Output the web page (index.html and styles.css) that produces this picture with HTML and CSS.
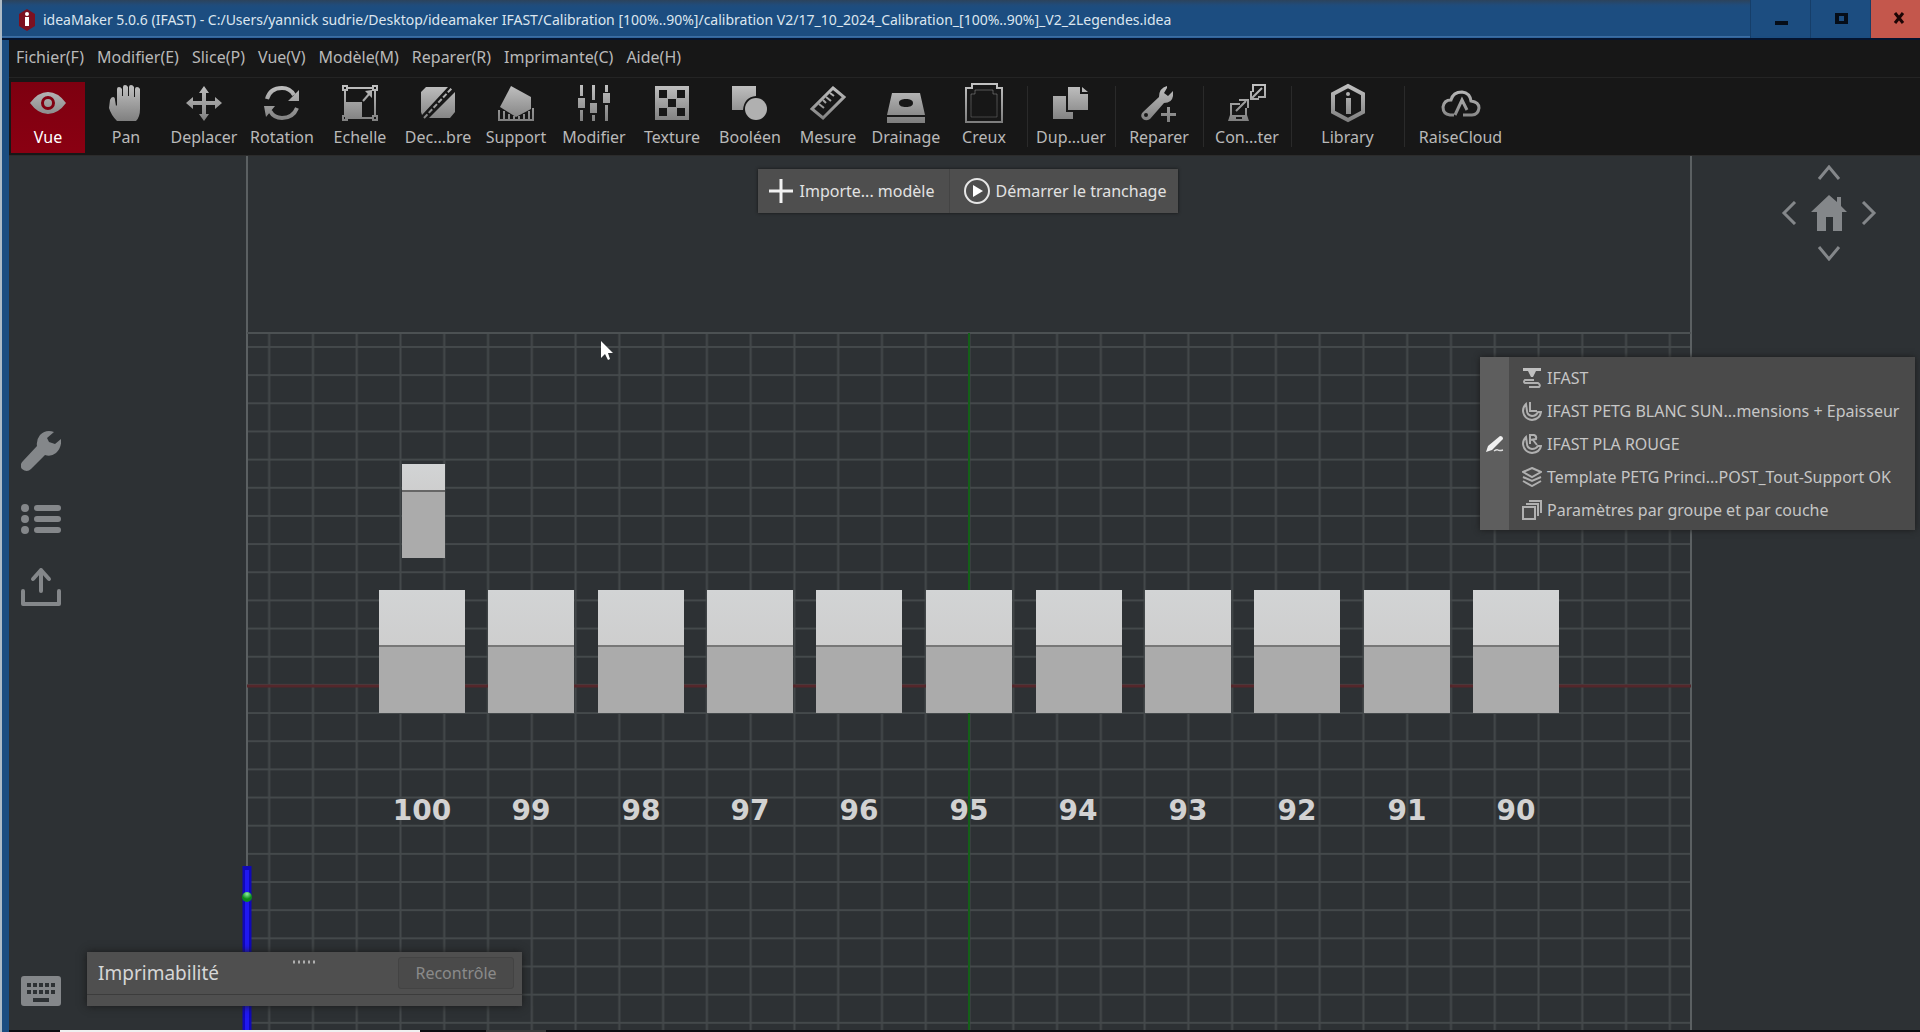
FILE: index.html
```html
<!DOCTYPE html>
<html lang="fr">
<head>
<meta charset="utf-8">
<title>ideaMaker 5.0.6 (IFAST)</title>
<link rel="stylesheet" href="styles.css">
</head>
<body>
<svg class="defs" aria-hidden="true">
  <defs>
    <linearGradient id="metal" gradientUnits="userSpaceOnUse" x1="0" y1="2" x2="0" y2="40">
      <stop offset="0" stop-color="#c2c2c2"/><stop offset="1" stop-color="#7e7e7e"/>
    </linearGradient>
  </defs>
</svg>
<div class="window">
  <header class="titlebar">
    <svg class="app-logo" viewBox="0 0 18 22"><path d="M9 0l8 5v12l-8 5-8-5V5z" fill="#7c1020"/><path d="M7 8h4v9H7z" fill="#fff"/><circle cx="9" cy="5" r="2" fill="#fff"/></svg>
    <h1 class="title">ideaMaker 5.0.6 (IFAST) - C:/Users/yannick sudrie/Desktop/ideamaker IFAST/Calibration [100%..90%]/calibration V2/17_10_2024_Calibration_[100%..90%]_V2_2Legendes.idea</h1>
    <div class="window-buttons">
      <button class="wbtn" aria-label="Réduire"><svg viewBox="0 0 20 20"><path d="M4 12h13v4H4z"/></svg></button>
      <button class="wbtn" aria-label="Agrandir"><svg viewBox="0 0 20 20"><path fill-rule="evenodd" d="M4 4h13v11H4zM8 7v5h5V7z"/></svg></button>
      <button class="wbtn wbtn-close" aria-label="Fermer"><svg viewBox="0 0 20 20"><path d="M9 4l8 10M17 4L9 14" stroke="#1c0505" stroke-width="3"/></svg></button>
    </div>
  </header>

  <nav class="menubar" aria-label="Menu">
    <button>Fichier(F)</button><button>Modifier(E)</button><button>Slice(P)</button><button>Vue(V)</button><button>Modèle(M)</button><button>Reparer(R)</button><button>Imprimante(C)</button><button>Aide(H)</button>
  </nav>

  <div class="toolbar" role="toolbar">
    <button class="tool active"><svg viewBox="0 0 40 42"><path fill-rule="evenodd" d="M2 21Q10 10 20 10t18 11Q30 32 20 32T2 21zM20 14a7 7 0 1 0 0 14 7 7 0 0 0 0-14zm0 3a4 4 0 1 1 0 8 4 4 0 0 1 0-8z"/></svg>Vue</button>
    <button class="tool"><svg viewBox="0 0 40 42"><path d="M11 39Q5 33 3 26L4 18q1-3 3-3 2 0 2 3l1 6 1-1V7q0-2 2-2t3 2v7h1V5q0-2 2-2t3 2v9h1V5q0-2 2-2t3 2v10h1V7q0-2 2-2t3 2v20q0 8-4 12H12z"/></svg>Pan</button>
    <button class="tool"><svg viewBox="0 0 40 42"><path d="M20 4l5 7h-3v8h9v-4l7 6-7 6v-4h-9v9h3l-5 7-5-7h3v-9H9v4l-7-6 7-6v4h9v-8h-3z"/></svg>Deplacer</button>
    <button class="tool"><svg viewBox="0 0 40 42"><path class="line" stroke-width="4" d="M5 17Q8 6 20 6q8 0 12 7M35 26Q31 36 20 36q-8 0-12-7"/><path d="M37 8v11H26zM2 24h11L4 35z"/></svg>Rotation</button>
    <button class="tool"><svg viewBox="0 0 40 42"><path class="line" stroke-width="2" d="M7 6h26M5 8v26M35 8v26M7 36h26M3 4h4v4H3zM33 4h4v4h-4zM3 34h4v4H3zM33 34h4v4h-4zM23 19l7-8"/><path d="M5 20h17v17H5zM32 8v8l-7-7z"/></svg>Echelle</button>
    <button class="tool"><svg viewBox="0 0 40 42"><path d="M8 5h22L4 33l-1-3V10zM37 10v20l-5 6H11z"/><path class="line" stroke-width="2" stroke-dasharray="5 2" d="M6 36L34 6"/></svg>Dec...bre</button>
    <button class="tool"><svg viewBox="0 0 40 42"><path d="M15 4l20 11v12L20 35 4 25z"/><path class="line" stroke-width="2" d="M2 38h36M3 28v10M8 29v9M13 32v6M18 34v4M23 34v4M28 32v6M33 29v9M37 26v12"/></svg>Support</button>
    <button class="tool"><svg viewBox="0 0 40 42"><path d="M6 3h3v11H6zM4 16h7v10H4zM6 28h3v11H6zM18 3h3v15h-3zM16 21h7v10h-7zM18 33h3v6h-3zM31 3h3v7h-3zM29 11h7v10h-7zM31 23h3v16h-3z"/></svg>Modifier</button>
    <button class="tool"><svg viewBox="0 0 40 42"><path fill-rule="evenodd" d="M3 4h34v34H3zM7 8v8h8V8zM25 8v8h8V8zM16 17v8h8v-8zM7 26v8h8v-8zM25 26v8h8v-8z"/></svg>Texture</button>
    <button class="tool"><svg viewBox="0 0 40 42"><path d="M2 4h24v10Q14 15 13 28H2z"/><circle cx="26" cy="27" r="11" fill="#b0b0b0"/></svg>Booléen</button>
    <button class="tool"><svg viewBox="0 0 40 42"><path class="line" stroke-width="3" d="M25 6l11 9L15 36 4 27z"/><path class="line" stroke-width="2" d="M11 22l5 4M15 18l3 3M18 15l5 4M22 11l4 3"/></svg>Mesure</button>
    <button class="tool"><svg viewBox="0 0 40 42"><path fill-rule="evenodd" d="M6 11h28l5 22H1zM20 17c-4 0-7 1-7 4s3 4 7 4 7-1 7-4-3-4-7-4zM1 35h38v6H1z"/></svg>Drainage</button>
    <button class="tool"><svg viewBox="0 0 40 42"><path class="line" stroke-width="2" d="M8 2h25v4h5v34H2V6h6z"/><path class="line faint" stroke-width="1" d="M11 8h18v4h4v23H7V12h4z"/></svg>Creux</button>
    <button class="tool tool-group"><svg viewBox="0 0 40 42"><path d="M2 14h13v16h7v7H2zM17 5h12v7h8v16H17zM31 5l6 5h-6z"/></svg>Dup...uer</button>
    <button class="tool tool-group"><svg viewBox="0 0 40 42"><path fill-rule="evenodd" d="M28 4q-8 2-8 11L4 30q-3 3-1 6 3 4 8 1l14-16q8 0 9-7V9l-5 5-4-3 3-5zM7 31a2 2 0 1 1 0 4 2 2 0 0 1 0-4zM28 25h3v6h6v3h-6v6h-3v-6h-6v-3h6z"/></svg>Reparer</button>
    <button class="tool tool-group"><svg viewBox="0 0 40 42"><path class="line" stroke-width="2" d="M13 22H4v12h15v-8M9 29l10-10M12 18h9v8M26 10V3h12v12h-7M35 6l-10 10M24 9v8h8"/><path fill-rule="evenodd" d="M3 33h17l2 6H1zM9 35v2h6v-2z"/></svg>Con...ter</button>
    <button class="tool tool-group wide"><svg viewBox="0 0 40 42"><path class="line" stroke-width="4" d="M20 4l15 8v18l-15 8-15-8V12z"/><path d="M18 16h5v16h-5z"/><circle cx="20" cy="12" r="2"/></svg>Library</button>
    <button class="tool tool-group wide"><svg viewBox="0 0 40 42"><path class="line" stroke-width="3" d="M13 33H9q-7-1-7-8 1-7 8-7 2-8 11-8 8 1 9 9 8 1 8 7-1 7-7 7h-9M14 33l7-15 5 10"/></svg>RaiseCloud</button>
  </div>

  <main class="viewport">
    <svg class="scene" viewBox="9 156 1911 874" preserveAspectRatio="xMidYMin slice">
      <defs>
        <pattern id="grid" patternUnits="userSpaceOnUse" x="246.8" y="346" width="43.77" height="28.16">
          <path d="M0 1H44M22.4 0V29" stroke="#44494b" stroke-width="2" fill="none"/>
        </pattern>
        <linearGradient id="top" x1="0" y1="0" x2="0" y2="1"><stop offset="0" stop-color="#d2d4d5"/><stop offset="1" stop-color="#cecece"/></linearGradient>
        <radialGradient id="ball" cx="50%" cy="20%"><stop offset="0" stop-color="#8df0a0"/><stop offset="1" stop-color="#0a8a18"/></radialGradient>
        <g id="cube"><path d="M-43 590h86v56h-86z" fill="url(#top)"/><path d="M-43 646h86v67h-86z" fill="#ababab"/><path d="M-43 646h86" stroke="#777" stroke-width="2"/></g>
      </defs>
      <rect x="247" y="333" width="1444" height="697" fill="url(#grid)"/>
      <path d="M247 156V1030M1691 156V1030" stroke="#5b6062" stroke-width="2"/>
      <path d="M247 333H1691" stroke="#4c5153" stroke-width="2"/>
      <path d="M247 686H1691" stroke="#55272b" stroke-width="3"/>
      <path d="M969 333V1030" stroke="#146018" stroke-width="2"/>
      <path d="M402 464h43v27h-43z" fill="url(#top)"/><path d="M402 491h43v67h-43z" fill="#ababab"/><path d="M402 491h43" stroke="#666" stroke-width="2"/>
      <use href="#cube" x="422"/><use href="#cube" x="531"/><use href="#cube" x="641"/><use href="#cube" x="750"/><use href="#cube" x="859"/><use href="#cube" x="969"/><use href="#cube" x="1079"/><use href="#cube" x="1188"/><use href="#cube" x="1297"/><use href="#cube" x="1407"/><use href="#cube" x="1516"/>
      <g class="cube-label">
        <text x="422" y="820">100</text><text x="531" y="820">99</text><text x="641" y="820">98</text><text x="750" y="820">97</text><text x="859" y="820">96</text><text x="969" y="820">95</text><text x="1078" y="820">94</text><text x="1188" y="820">93</text><text x="1297" y="820">92</text><text x="1407" y="820">91</text><text x="1516" y="820">90</text>
      </g>
      <path d="M969 800V822" stroke="#146018" stroke-width="2"/>
      <path d="M247 866V1030" stroke="#1008b8" stroke-width="9"/><path d="M247 870V1030" stroke="#2018f0" stroke-width="4"/>
      <circle cx="247" cy="897" r="5" fill="url(#ball)"/>
      <path d="M601 341v17l4-4 3 6 2-1-2-6h5z" fill="#fff"/>
    </svg>

    <div class="quick-actions">
      <button><svg viewBox="0 0 26 26"><path d="M13 1v24M1 13h24" stroke="#f2f2f2" stroke-width="3"/></svg>Importe... modèle</button>
      <button><svg viewBox="0 0 26 26"><circle cx="13" cy="13" r="12" fill="none" stroke="#e6e6e6" stroke-width="2"/><path d="M9 7l10 6-10 6z" fill="#fff"/></svg>Démarrer le tranchage</button>
    </div>

    <div class="view-nav">
      <button class="n-up" aria-label="Haut"><svg viewBox="0 0 24 16"><path d="M2 14L12 2l10 12"/></svg></button>
      <button class="n-left" aria-label="Gauche"><svg viewBox="0 0 16 24"><path d="M14 1L3 12l11 11"/></svg></button>
      <button class="n-home" aria-label="Accueil"><svg viewBox="0 0 36 36"><path class="solid" d="M18 0l8 7V2h4v9l6 6h-5v19h-9V22h-7v14H6V17H0z"/></svg></button>
      <button class="n-right" aria-label="Droite"><svg viewBox="0 0 16 24"><path d="M2 1l11 11L2 23"/></svg></button>
      <button class="n-down" aria-label="Bas"><svg viewBox="0 0 24 16"><path d="M2 2l10 12L22 2"/></svg></button>
    </div>

    <div class="side-tools">
      <button aria-label="Outils"><svg viewBox="0 0 40 40"><path d="M33 1Q25-2 19 4q-4 5-3 11L2 30q-4 4-1 8 5 4 9 0l14-14q6 2 11-2 6-6 5-14l-6 5-6-2-2-4z"/></svg></button>
      <button aria-label="Liste"><svg viewBox="0 0 40 40"><path d="M4 5a4 4 0 1 1 0 8 4 4 0 0 1 0-8zm0 11a4 4 0 1 1 0 8 4 4 0 0 1 0-8zm0 11a4 4 0 1 1 0 8 4 4 0 0 1 0-8z"/><path d="M16 9h21M16 20h21M16 31h21" stroke="#84878a" stroke-width="6" stroke-linecap="round"/></svg></button>
      <button aria-label="Exporter"><svg viewBox="0 0 40 40"><path d="M2 24v13h36V24M20 24V3M12 12l8-9 8 9" fill="none" stroke="#84878a" stroke-width="4" stroke-linecap="round" stroke-linejoin="round"/></svg></button>
    </div>
    <button class="keyboard" aria-label="Clavier"><svg viewBox="0 0 40 30"><path fill-rule="evenodd" d="M3 0h34q3 0 3 3v24q0 3-3 3H3q-3 0-3-3V3q0-3 3-3zM12 22v4h16v-4z"/><path d="M6 9h29M6 16h29" stroke="#2d3134" stroke-width="4" stroke-dasharray="4 2"/></svg></button>

    <aside class="settings">
      <button class="edit-strip" aria-label="Éditer"><svg viewBox="0 0 18 18"><path d="M14 1q3 0 3 3L6 15l-6 2 2-6z" fill="#f0f0f0"/><path d="M8 16q3-2 4-1t5 0" fill="none" stroke="#ddd" stroke-width="1.5"/></svg></button>
      <ul>
        <li><svg viewBox="0 0 20 20"><path d="M1 0h18v3h-5l-3 6H9L6 3H1z" class="solid"/><path d="M12 12H3q-2 2 0 3h13q3 2 1 4H7"/></svg>IFAST</li>
        <li><svg viewBox="0 0 20 20"><path d="M4 3Q1 6 1 10q1 8 9 9 8-1 9-8h-3q-2 4-6 4-5-1-5-5z"/><path d="M8 1v9h7"/></svg>IFAST PETG BLANC SUN...mensions + Epaisseur</li>
        <li><svg viewBox="0 0 20 20"><path d="M4 3Q1 6 1 10q1 8 9 9 8-1 9-7h-3q-2 3-6 3-5-1-5-5z"/><path d="M8 10V1h4q3 1 2 4l-6 1M11 6l4 5"/></svg>IFAST PLA ROUGE</li>
        <li><svg viewBox="0 0 20 20"><path d="M10 1l9 4-9 5-9-5zM1 10l9 4 9-4M1 14l9 5 9-5"/></svg>Template PETG Princi...POST_Tout-Support OK</li>
        <li><svg viewBox="0 0 20 20"><path d="M1 7h12v12H1zM4 4h12v12M7 1h12v12"/></svg>Paramètres par groupe et par couche</li>
      </ul>
    </aside>

    <section class="printability">
      <div class="print-head">
        <h2>Imprimabilité</h2>
        <svg class="grip" viewBox="0 0 24 4"><path d="M1 2h22" stroke="#b0b0b0" stroke-width="3" stroke-dasharray="2 3"/></svg>
        <button disabled>Recontrôle</button>
      </div>
      <div class="print-foot"></div>
    </section>
  </main>
  <footer class="taskbar"><span class="task-light"></span><span class="task-dim"></span></footer>
</div>
</body>
</html>
```
FILE: styles.css
```css
* { box-sizing: border-box; }
body {
  margin: 0;
  font: 16px/20px "Noto Sans", "Open Sans", sans-serif;
  color: #b9b9b9;
  background: #171717;
}
button {
  margin: 0;
  padding: 0;
  border: 0;
  background: none;
  font: inherit;
  color: inherit;
  white-space: nowrap;
}
svg { display: block; }
.defs { position: absolute; width: 0; height: 0; }
.window {
  display: grid;
  grid-template-rows: auto auto auto 1fr auto;
  height: 100vh;
  padding-left: 9px;
  background: linear-gradient(90deg, #aebbc6 2px, #1c4d80 2px) left / 9px 100% no-repeat;
}

.titlebar {
  display: flex;
  align-items: center;
  height: 40px;
  margin-left: -7px;
  background: linear-gradient(#2c435c 0, #204c7b 5px, #1c4d80 8px, #1c4d80 36px, #4272a5 36px, #2b609a 38px, #04142f 38px);
}
.app-logo { width: 18px; height: 22px; margin: 0 7px 0 16px; }
.title {
  flex: 1;
  min-width: 0;
  margin: 0;
  overflow: hidden;
  font-size: 14px;
  font-weight: 400;
  white-space: nowrap;
  color: #dce6ef;
}
.window-buttons { display: flex; align-self: flex-start; }
.wbtn {
  display: grid;
  place-items: center;
  width: 60px;
  height: 38px;
  border-left: 1px solid #163e69;
  background: #1c4d80;
}
.wbtn svg { width: 20px; height: 20px; fill: #050d18; }
.wbtn-close { width: 50px; background: #c4574c; }

.menubar {
  display: flex;
  gap: 1px;
  height: 38px;
  padding: 0 1px 4px;
  background: #171717;
  border-bottom: 1px solid #242424;
}
.menubar button { padding: 0 6px; }

.toolbar {
  display: flex;
  height: 78px;
  padding-right: 1px;
  background: #171717;
  border-bottom: 1px solid #2b2b2b;
}
.tool {
  display: flex;
  flex-direction: column;
  align-items: center;
  gap: 3px;
  flex: none;
  width: 78px;
  padding-top: 4px;
}
.tool svg { width: 40px; height: 42px; fill: url(#metal); }
.tool .line { fill: none; stroke: url(#metal); }
.tool .faint { opacity: .4; }
.tool.active {
  color: #fff;
  background: linear-gradient(#7d0010, #8a0012) center 4px / 74px 71px no-repeat;
}
.tool-group { position: relative; width: 88px; }
.tool-group:nth-child(14) { margin-left: 4px; }
.tool-group.wide { width: 113px; }
.tool-group::before {
  content: "";
  position: absolute;
  left: 0;
  top: 8px;
  bottom: 8px;
  width: 1px;
  background: #2a2a2a;
}

.viewport {
  position: relative;
  min-height: 0;
  overflow: hidden;
  background: #2d3134;
}
.scene { position: absolute; width: 100%; height: 100%; }
.cube-label {
  font: bold 28px "DejaVu Sans", sans-serif;
  text-anchor: middle;
  fill: #d2d2d2;
}

.quick-actions {
  position: absolute;
  top: 13px;
  left: 50%;
  display: flex;
  height: 44px;
  margin-left: -207px;
  padding: 0 12px 0 10px;
  background: #4e4e4e;
  box-shadow: 0 0 3px #151515;
  color: #e2e2e2;
}
.quick-actions button { display: flex; align-items: center; gap: 6px; }
.quick-actions button + button {
  margin-left: 14px;
  padding-left: 14px;
  border-left: 1px solid #444;
}
.quick-actions svg { width: 26px; height: 26px; }

.view-nav {
  position: absolute;
  top: 9px;
  right: 43px;
  display: grid;
  grid-template: 16px 64px 16px / 16px 64px 16px;
  grid-template-areas: ". u ." "l h r" ". d .";
  place-items: center;
}
.view-nav svg { width: 24px; height: 16px; fill: none; stroke: #84878a; stroke-width: 3; }
.n-up { grid-area: u; }
.n-left { grid-area: l; }
.n-home { grid-area: h; }
.n-right { grid-area: r; }
.n-down { grid-area: d; }
.view-nav .n-left svg, .view-nav .n-right svg { width: 16px; height: 24px; }
.view-nav .n-home svg { width: 36px; height: 36px; }
.view-nav .solid { fill: #84878a; stroke: none; }

.side-tools {
  position: absolute;
  left: 12px;
  top: 275px;
  display: flex;
  flex-direction: column;
  gap: 28px;
}
.side-tools svg { width: 40px; height: 40px; fill: #84878a; }
.keyboard { position: absolute; left: 12px; bottom: 24px; }
.keyboard svg { width: 40px; height: 30px; fill: #84878a; }

.settings {
  position: absolute;
  top: 201px;
  right: 5px;
  display: flex;
  width: 435px;
  background: #4a4a4a;
  box-shadow: 0 0 6px #1b1b1b;
  color: #c6c6c6;
}
.edit-strip { display: grid; place-items: center; width: 29px; background: #5e5e5e; }
.edit-strip svg { width: 18px; height: 18px; }
.settings ul { margin: 0; padding: 4px 0 4px 13px; list-style: none; }
.settings li { display: flex; align-items: center; gap: 5px; height: 33px; white-space: nowrap; }
.settings li svg { width: 20px; height: 20px; fill: none; stroke: #b0b0b0; stroke-width: 2; }
.settings li .solid { fill: #c0c0c0; stroke: none; }

.printability {
  position: absolute;
  left: 78px;
  bottom: 24px;
  width: 435px;
  background: #4f4f4f;
  box-shadow: 0 0 8px #191919;
}
.print-head {
  display: flex;
  align-items: center;
  justify-content: space-between;
  position: relative;
  height: 43px;
  padding: 0 8px 0 11px;
  border-bottom: 1px solid #3c3c3c;
}
.print-head h2 { margin: 0; font-size: 19px; font-weight: 400; color: #d6d6d6; }
.grip { position: absolute; left: 50%; top: 8px; width: 24px; height: 4px; margin-left: -13px; }
.print-head button {
  width: 116px;
  height: 32px;
  border: 1px solid #434343;
  border-radius: 3px;
  background: #4a4a4a;
  color: #8a8a8a;
}
.print-foot { height: 11px; }

.taskbar { display: flex; height: 2px; background: #0d0d10; }
.task-light { width: 360px; margin-left: 51px; background: #f0f0f0; }
.task-dim { width: 60px; margin-left: 66px; background: #3a3a3a; }
```
